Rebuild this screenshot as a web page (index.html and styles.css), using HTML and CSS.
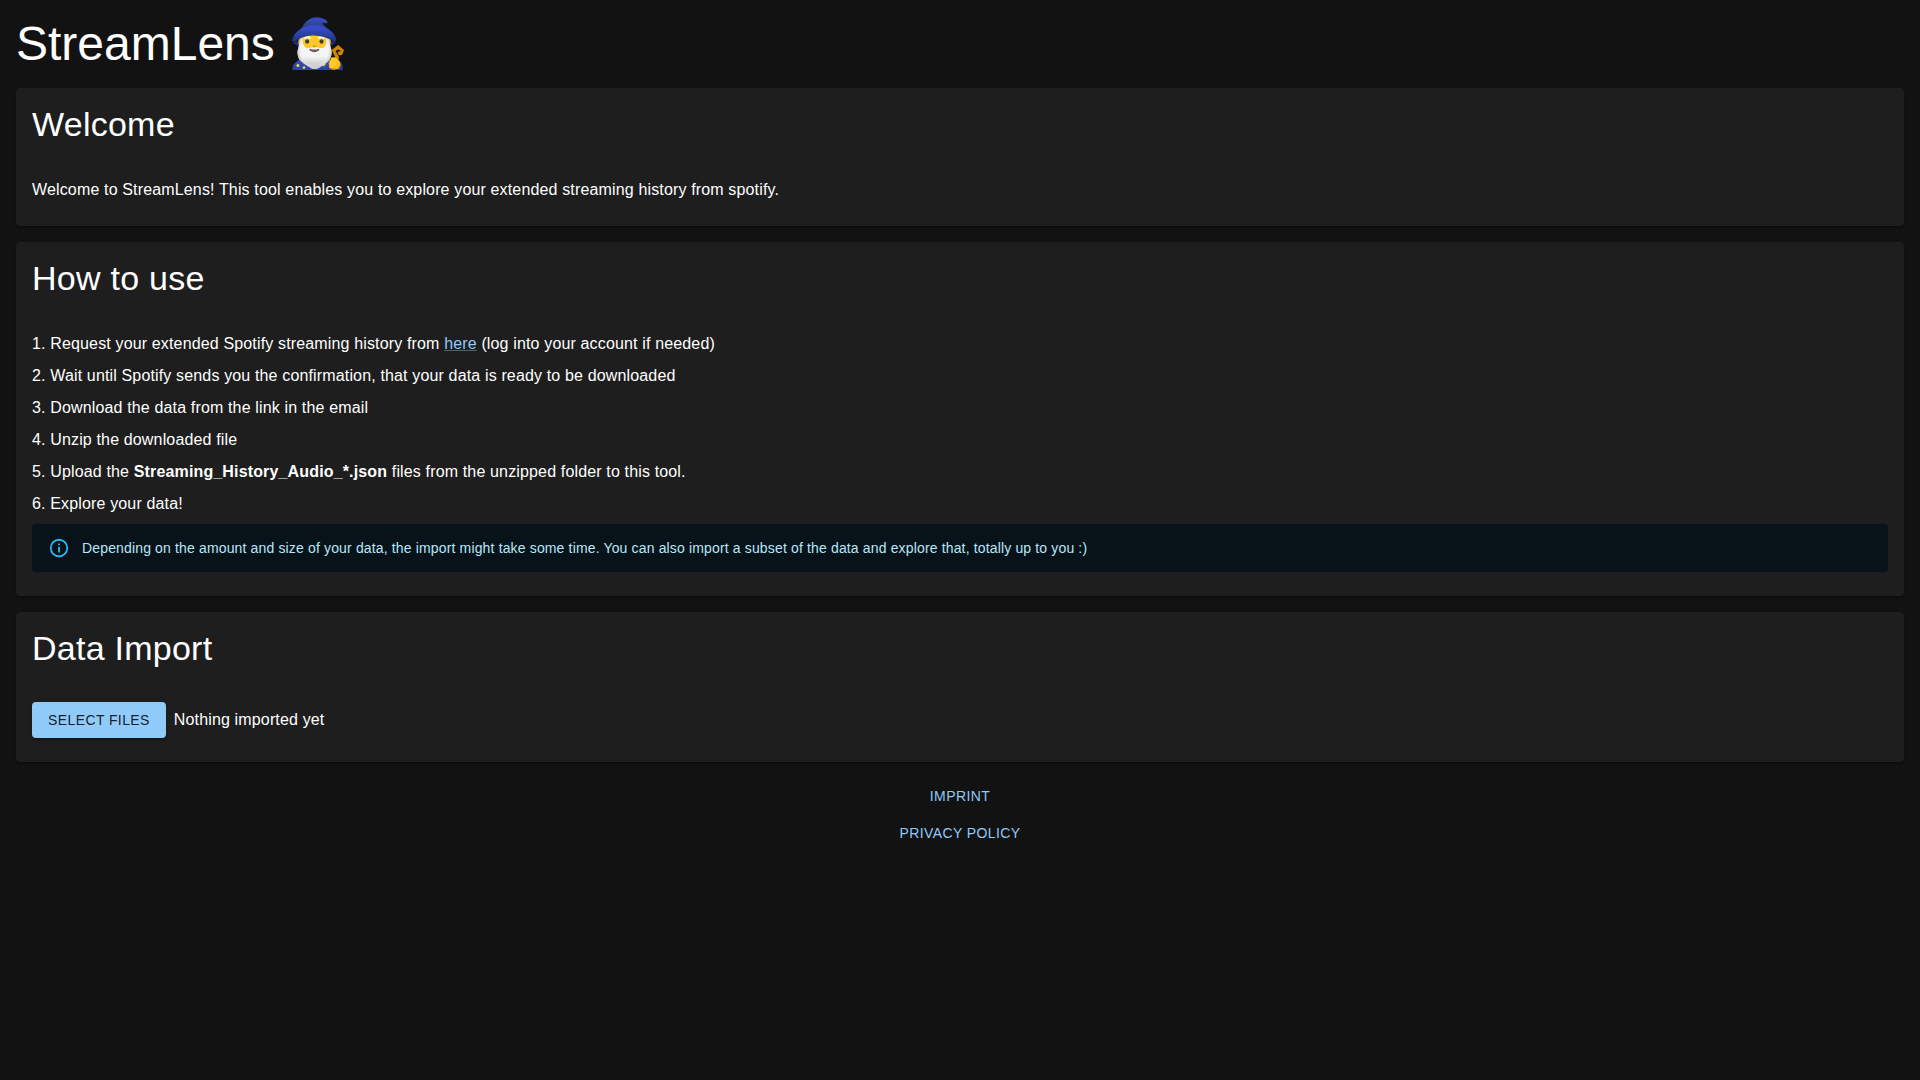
FILE: index.html
```
<!DOCTYPE html>
<html lang="en">
<head>
  <meta charset="UTF-8" />
  <meta name="viewport" content="width=device-width, initial-scale=1.0" />
  <title>StreamLens</title>
  <link rel="stylesheet" href="styles.css">
</head>
<body>
  <main class="page">
    <h1 class="page-title">StreamLens 🧙‍♂️</h1>

    <section class="card">
      <h2 class="card-title">Welcome</h2>
      <div class="card-content">
        <p>Welcome to StreamLens! This tool enables you to explore your extended streaming history from spotify.</p>
      </div>
    </section>

    <section class="card">
      <h2 class="card-title">How to use</h2>
      <div class="card-content">
        <div class="steps">
          <p>1. Request your extended Spotify streaming history from <a class="link" href="https://www.spotify.com/account/privacy/">here</a> (log into your account if needed)</p>
          <p>2. Wait until Spotify sends you the confirmation, that your data is ready to be downloaded</p>
          <p>3. Download the data from the link in the email</p>
          <p>4. Unzip the downloaded file</p>
          <p>5. Upload the <b>Streaming_History_Audio_*.json</b> files from the unzipped folder to this tool.</p>
          <p>6. Explore your data!</p>
          <div class="alert" role="alert">
            <svg class="alert-icon" viewBox="0 0 24 24" aria-hidden="true">
              <path d="M11,9H13V7H11M12,20C7.59,20 4,16.41 4,12C4,7.59 7.59,4 12,4C16.41,4 20,7.59 20,12C20,16.41 16.41,20 12,20M12,2A10,10 0 0,0 2,12A10,10 0 0,0 12,22A10,10 0 0,0 22,12A10,10 0 0,0 12,2M11,17H13V11H11V17Z" />
            </svg>
            <div class="alert-message">Depending on the amount and size of your data, the import might take some time. You can also import a subset of the data and explore that, totally up to you :)</div>
          </div>
        </div>
      </div>
    </section>

    <section class="card">
      <h2 class="card-title">Data Import</h2>
      <div class="card-content import-row">
        <button class="btn btn-contained" type="button">Select files</button>
        <p>Nothing imported yet</p>
      </div>
    </section>

    <footer class="footer">
      <a class="btn btn-text" href="#imprint">Imprint</a>
      <a class="btn btn-text" href="#privacy">Privacy Policy</a>
    </footer>
  </main>
</body>
</html>
```
FILE: styles.css
```
:root {
  --background: #121212;
  --surface: #1e1e1e;
  --text: #fff;
  --primary: #90caf9;
}

* {
  box-sizing: border-box;
}

body {
  margin: 0;
  background: var(--background);
  color: var(--text);
  font-family: Helvetica, Arial, "Liberation Sans", sans-serif;
  font-size: 16px;
  line-height: 24px;
  letter-spacing: 0.15px;
}

p {
  margin: 0;
}

.page {
  display: flex;
  flex-direction: column;
  gap: 16px;
  padding: 16px;
}

.page-title {
  margin: 0;
  font-size: 48px;
  font-weight: 400;
  line-height: 56px;
  letter-spacing: 0;
}

.card {
  background: var(--surface);
  border-radius: 4px;
  box-shadow: 0 2px 1px -1px rgba(0,0,0,0.2), 0 1px 1px 0 rgba(0,0,0,0.14), 0 1px 3px 0 rgba(0,0,0,0.12);
}

.card-title {
  margin: 0;
  padding: 16px 16px 18px;
  font-size: 34px;
  font-weight: 400;
  line-height: 40px;
  letter-spacing: 0.25px;
}

.card-content {
  padding: 16px 16px 24px;
}

.steps {
  display: flex;
  flex-direction: column;
  gap: 8px;
}

.link {
  color: var(--primary);
  text-decoration-color: rgba(144, 202, 249, 0.4);
}

.link:hover {
  text-decoration-color: inherit;
}

.alert {
  display: flex;
  padding: 6px 16px;
  border-radius: 4px;
  background: #071318;
  color: #b8e7fb;
  font-size: 14px;
  line-height: 20px;
}

.alert-icon {
  width: 22px;
  height: 22px;
  margin: 7px 12px 7px 0;
  fill: #29b6f6;
}

.alert-message {
  padding: 8px 0;
}

.import-row {
  display: flex;
  align-items: center;
  gap: 8px;
}

/* Buttons */
.btn {
  border: 0;
  border-radius: 4px;
  font-family: inherit;
  font-size: 14px;
  line-height: 24px;
  letter-spacing: 0.4px;
  text-transform: uppercase;
  text-decoration: none;
  cursor: pointer;
}

.btn-contained {
  padding: 6px 16px;
  background: var(--primary);
  color: rgba(0, 0, 0, 0.87);
  box-shadow: 0 3px 1px -2px rgba(0,0,0,0.2), 0 2px 2px 0 rgba(0,0,0,0.14), 0 1px 5px 0 rgba(0,0,0,0.12);
}

.btn-text {
  padding: 6px 8px;
  background: none;
  color: var(--primary);
  line-height: 25px;
}

.footer {
  display: flex;
  flex-direction: column;
  align-items: center;
}
```
